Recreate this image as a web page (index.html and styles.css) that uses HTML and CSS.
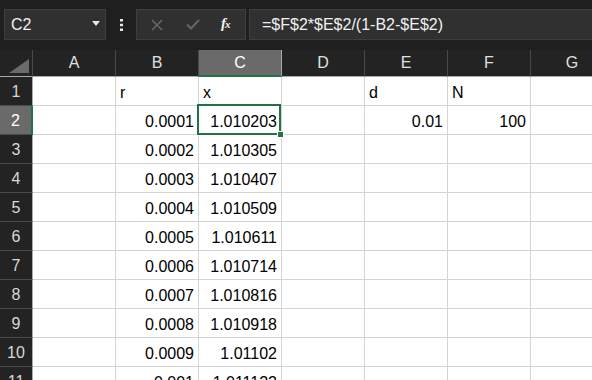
FILE: index.html
```html
<!DOCTYPE html>
<html>
<head>
<meta charset="utf-8">
<link rel="stylesheet" href="styles.css">
</head>
<body>
<div class="app">
  <div class="toolbar">
    <div class="namebox">
      <span class="name">C2</span>
      <svg class="caret" width="8" height="5" viewBox="0 0 8 5"><path d="M0 0H8L4 5Z" fill="#e8e8e8"/></svg>
    </div>
    <div class="more">
      <svg width="3" height="12" viewBox="0 0 3 12"><rect x="0" y="0" width="3" height="2.5" fill="#e8e8e8"/><rect x="0" y="4.75" width="3" height="2.5" fill="#e8e8e8"/><rect x="0" y="9.5" width="3" height="2.5" fill="#e8e8e8"/></svg>
    </div>
    <div class="buttons">
      <svg class="btn" width="12" height="12" viewBox="0 0 12 12"><path d="M1 1L11 11M11 1L1 11" stroke="#666" stroke-width="1.6"/></svg>
      <svg class="btn" width="14" height="11" viewBox="0 0 14 11"><path d="M1 5.5L5 9.5L13 1" stroke="#666" stroke-width="2" fill="none"/></svg>
      <span class="fx"><i>f</i><i class="x">x</i></span>
    </div>
    <div class="formula">=$F$2*$E$2/(1-B2-$E$2)</div>
  </div>
  <div class="sheet">
    <div class="row head">
      <div class="corner"><svg width="20" height="14" viewBox="0 0 20 14"><path d="M20 0V14H0Z" fill="#6b6b6b"/></svg></div>
      <div class="ch">A</div><div class="ch">B</div><div class="ch sel">C</div><div class="ch">D</div><div class="ch">E</div><div class="ch">F</div><div class="ch">G</div>
    </div>
    <div class="row"><div class="rh">1</div><div class="c"></div><div class="c l">r</div><div class="c l">x</div><div class="c"></div><div class="c l">d</div><div class="c l">N</div><div class="c"></div></div>
    <div class="row"><div class="rh sel">2</div><div class="c"></div><div class="c">0.0001</div><div class="c active">1.010203<span class="selbox"><span class="handle"></span></span></div><div class="c"></div><div class="c">0.01</div><div class="c">100</div><div class="c"></div></div>
    <div class="row"><div class="rh">3</div><div class="c"></div><div class="c">0.0002</div><div class="c">1.010305</div><div class="c"></div><div class="c"></div><div class="c"></div><div class="c"></div></div>
    <div class="row"><div class="rh">4</div><div class="c"></div><div class="c">0.0003</div><div class="c">1.010407</div><div class="c"></div><div class="c"></div><div class="c"></div><div class="c"></div></div>
    <div class="row"><div class="rh">5</div><div class="c"></div><div class="c">0.0004</div><div class="c">1.010509</div><div class="c"></div><div class="c"></div><div class="c"></div><div class="c"></div></div>
    <div class="row"><div class="rh">6</div><div class="c"></div><div class="c">0.0005</div><div class="c">1.010611</div><div class="c"></div><div class="c"></div><div class="c"></div><div class="c"></div></div>
    <div class="row"><div class="rh">7</div><div class="c"></div><div class="c">0.0006</div><div class="c">1.010714</div><div class="c"></div><div class="c"></div><div class="c"></div><div class="c"></div></div>
    <div class="row"><div class="rh">8</div><div class="c"></div><div class="c">0.0007</div><div class="c">1.010816</div><div class="c"></div><div class="c"></div><div class="c"></div><div class="c"></div></div>
    <div class="row"><div class="rh">9</div><div class="c"></div><div class="c">0.0008</div><div class="c">1.010918</div><div class="c"></div><div class="c"></div><div class="c"></div><div class="c"></div></div>
    <div class="row"><div class="rh">10</div><div class="c"></div><div class="c">0.0009</div><div class="c">1.01102</div><div class="c"></div><div class="c"></div><div class="c"></div><div class="c"></div></div>
    <div class="row"><div class="rh">11</div><div class="c"></div><div class="c">0.001</div><div class="c">1.011122</div><div class="c"></div><div class="c"></div><div class="c"></div><div class="c"></div></div>
  </div>
</div>
</body>
</html>
```
FILE: styles.css
```css
* { box-sizing: border-box; }
html, body { margin: 0; padding: 0; }
body {
  width: 592px;
  height: 380px;
  overflow: hidden;
  background: #ffffff;
  font-family: "Liberation Sans", Arial, sans-serif;
  font-size: 16px;
}
.app { width: 592px; height: 380px; overflow: hidden; }

.toolbar {
  height: 50px;
  background: #1f1f1f;
  display: flex;
  align-items: flex-start;
  padding-top: 9px;
  padding-left: 4px;
}
.namebox {
  width: 102px;
  height: 31px;
  background: #303030;
  border: 1px solid #3e3e3e;
  display: flex;
  align-items: center;
  justify-content: space-between;
  padding: 0 5px 0 6px;
  color: #f0f0f0;
}
.name { padding-top: 1px; }
.caret { margin-top: -2px; }
.more {
  width: 30px;
  height: 31px;
  display: flex;
  align-items: center;
  justify-content: center;
}
.buttons {
  width: 110px;
  height: 31px;
  background: #303030;
  border: 1px solid #3e3e3e;
  display: flex;
  align-items: center;
  padding-left: 14px;
  gap: 0;
}
.buttons .btn:nth-child(1) { margin-right: 23px; }
.buttons .btn:nth-child(2) { margin-right: 21px; }
.fx {
  font-family: "Liberation Serif", "DejaVu Serif", serif;
  color: #f2f2f2;
  font-weight: bold;
  font-size: 15px;
  line-height: 1;
  margin-top: -2px;
}
.fx .x { font-size: 11px; margin-left: -1px; }
.formula {
  flex: 1;
  margin-left: 3px;
  height: 31px;
  background: #303030;
  border: 1px solid #3e3e3e;
  border-right: none;
  color: #f0f0f0;
  padding-left: 12px;
  line-height: 29px;
  white-space: nowrap;
}

.sheet { background: #ffffff; }
.row {
  display: flex;
  height: 29px;
}
.row.head {
  height: 27px;
  background: #232323;
}
.corner {
  width: 33px;
  flex: none;
  border-bottom: 1px solid #a8a8a8;
  border-right: 1px solid #a8a8a8;
  display: flex;
  align-items: flex-end;
  justify-content: flex-end;
  padding: 0 3px 3px 0;
  border-right-color: #4a4a4a;
}
.ch {
  width: 83px;
  flex: none;
  border-right: 1px solid #4a4a4a;
  border-bottom: 1px solid #a8a8a8;
  color: #e0e0e0;
  text-align: center;
  line-height: 26px;
}
.ch.sel {
  background: #6a6a6a;
  color: #ffffff;
  border-bottom: 2px solid #217346;
  border-right-color: #a8a8a8;
}
.rh {
  width: 33px;
  flex: none;
  background: #232323;
  color: #d8d8d8;
  border-right: 1px solid #a8a8a8;
  border-bottom: 1px solid #4a4a4a;
  text-align: center;
  line-height: 30px;
}
.rh.sel {
  background: #6a6a6a;
  color: #ffffff;
  border-right: 2px solid #217346;
}
.c {
  width: 83px;
  flex: none;
  border-right: 1px solid #d4d4d4;
  border-bottom: 1px solid #d4d4d4;
  color: #000000;
  text-align: right;
  padding: 0 4px;
  line-height: 31px;
  white-space: nowrap;
  overflow: hidden;
}
.c.l { text-align: left; padding-left: 4px; }
.c.active { position: relative; overflow: visible; }
.selbox {
  position: absolute;
  left: -2px;
  top: -2px;
  width: 84px;
  height: 31px;
  border: 2px solid #217346;
}
.handle {
  position: absolute;
  right: -5px;
  bottom: -5px;
  width: 7px;
  height: 7px;
  background: #217346;
  border: 1px solid #ffffff;
}
```
